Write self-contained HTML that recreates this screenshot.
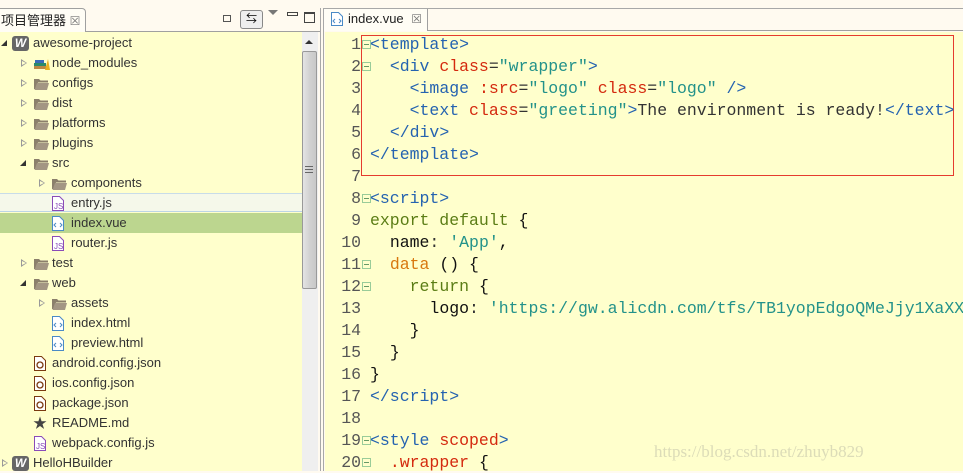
<!DOCTYPE html>
<html><head><meta charset="utf-8"><style>
*{margin:0;padding:0;box-sizing:border-box}
body{width:963px;height:471px;overflow:hidden;background:#fffaf0;font-family:"Liberation Sans","Noto Sans CJK SC",sans-serif;position:relative}
.abs{position:absolute}
.tree{left:0;top:32px;width:302px;height:439px;background:#ffffcc}
.row{position:absolute;left:0;width:302px;height:20px;font-size:13px;color:#333;line-height:20px;white-space:nowrap}
.row span.t{position:absolute}
.arr{position:absolute;top:6px;width:0;height:0;border-left:6px solid #999;border-top:4px solid transparent;border-bottom:4px solid transparent}
.arr:after{content:"";position:absolute;left:-5px;top:-2px;border-left:4px solid #ffffcc;border-top:2px solid transparent;border-bottom:2px solid transparent}
.open{position:absolute;top:7px;width:0;height:0;border-right:6px solid #333;border-top:6px solid transparent}
.code{left:325px;top:32px;width:638px;height:439px;background:#ffffcc;font-family:"Liberation Mono",monospace;font-size:16.5px}
.ln{position:absolute;width:36px;text-align:right;color:#555;left:0}
.cl{position:absolute;left:45px;white-space:pre;color:#333}
.tg{color:#2563b0}.at{color:#d42a0f}.st{color:#23928a}.kw{color:#5b7d15}.pr{color:#d8780e}.bk{color:#111}
.fold{position:absolute;left:37px;width:9px;height:9px;border:1px solid #9c9;background:#ffffcc}
.fold:after{content:"";position:absolute;left:1px;top:3px;width:5px;height:1px;background:#696}
</style></head><body>
<div class="abs" style="left:0;top:31px;width:320px;height:1px;background:#a0a0a0"></div>
<div class="abs" style="left:0;top:8px;width:86px;height:24px;background:#fffdf5;border:1px solid #a0a0a0;border-bottom:none;border-left:none;border-radius:0 4px 0 0"></div>
<div class="abs" style="left:1px;top:10px;font-size:13px;color:#222">项目管理器 <span style="color:#777;font-size:12px">☒</span></div>
<div class="abs" style="left:223px;top:15px;width:8px;height:7px;border:1px solid #555"></div>
<div class="abs" style="left:240px;top:10px;width:23px;height:19px;border:1px solid #888;border-radius:3px;background:#eee;font-size:11px;text-align:center;line-height:17px">⇆</div>
<div class="abs" style="left:268px;top:10px;width:0;height:0;border-left:5px solid transparent;border-right:5px solid transparent;border-top:5px solid #777"></div>
<div class="abs" style="left:287px;top:12px;width:11px;height:4px;border:1px solid #444"></div>
<div class="abs" style="left:304px;top:12px;width:11px;height:11px;border:1px solid #444;border-top-width:2px"></div>
<div class="abs" style="left:320px;top:8px;width:1px;height:463px;background:#a8a8a8"></div>
<div class="abs" style="left:323px;top:8px;width:1px;height:463px;background:#a8a8a8"></div>
<div class="abs" style="left:324px;top:30px;width:639px;height:1px;background:#a0a0a0"></div>
<div class="abs" style="left:324px;top:8px;width:639px;height:1px;background:#a8a8a8"></div>
<div class="abs" style="left:324px;top:9px;width:104px;height:22px;background:#fffdf5;border-right:1px solid #a0a0a0"></div>
<svg class="abs" style="left:330px;top:11px" width="14" height="16"><path d="M1.5 1.5h7l4 4v9h-11z" fill="#fff" stroke="#4a8ac6"/><path d="M5 8l-2 2 2 2M9 8l2 2-2 2" fill="none" stroke="#4a8ac6"/></svg>
<div class="abs" style="left:348px;top:11px;font-size:13px;color:#222">index.vue <span style="color:#777;font-size:12px;margin-left:4px">☒</span></div>

<div class="abs tree">
<div class="abs" style="left:0;top:161px;width:302px;height:19px;background:#f5f8ea;border-top:1px solid #c8dce8;border-bottom:1px solid #bcd4e6"></div>
<div class="abs" style="left:0;top:181px;width:302px;height:20px;background:#bcd68f"></div>
</div>
<div id="rows"></div>
<div class="abs" style="left:302px;top:32px;width:16px;height:439px;background:#efefef"></div>
<div class="abs" style="left:305px;top:40px;width:0;height:0;border-left:4px solid transparent;border-right:4px solid transparent;border-bottom:4px solid #333"></div>
<div class="abs" style="left:302px;top:51px;width:15px;height:238px;border:1px solid #999;border-radius:2px;background:linear-gradient(90deg,#e4e4e4,#d2d2d2 50%,#c8c8c8)"></div>
<div class="abs" style="left:305px;top:166px;width:8px;height:7px;border-top:1px solid #666;border-bottom:1px solid #666"></div>
<div class="abs" style="left:305px;top:169px;width:8px;height:1px;background:#666"></div>

<div class="abs code">
<div class="abs" style="left:36px;top:3px;width:593px;height:141px;border:1px solid #e53b2e"></div>
<div id="code"></div>
<div class="abs" style="left:329px;top:410px;font-family:'Liberation Serif',serif;font-size:17px;color:#dcdcb8">https://blog.csdn.net/zhuyb829</div>
</div>

<script>
var F='<svg width="17" height="14" style="position:absolute;top:4px"><path d="M1 2h5l1.5 1.5H15v2H5L3 12H1z" fill="#8b7f6b"/><path d="M4 6h12l-2 7H1.5z" fill="#a39683"/></svg>';
function doc(c,inner){return '<svg width="14" height="17" style="position:absolute;top:2px"><path d="M1.5 1.5h7l4 4v10h-11z" fill="#fff" stroke="'+c+'"/>'+inner+'</svg>';}
var JS=doc('#8a4cb8','<text x="3" y="14" font-size="8" font-family="Liberation Sans" fill="#8a4cb8">JS</text>');
var VUE=doc('#4a8ac6','<path d="M5 8l-2 2 2 2M9 8l2 2-2 2" fill="none" stroke="#4a8ac6"/>');
var JSON=doc('#7a3a10','<circle cx="7" cy="10" r="3" fill="none" stroke="#7a3a10" stroke-width="1.3"/>');
var W='<div style="position:absolute;top:3px;width:17px;height:15px;background:#666;border-radius:3px;color:#fff;font-weight:bold;font-style:italic;font-size:12px;line-height:15px;text-align:center">W</div>';
var NM='<svg width="18" height="14" style="position:absolute;top:4px"><rect x="1" y="9" width="13" height="3" fill="#b84"/><rect x="1" y="6" width="12" height="3" fill="#2a8a6a"/><rect x="2" y="3" width="9" height="3" fill="#3a6ab8"/><path d="M12 13l3-11 2 11z" fill="#e8b020"/></svg>';
var STAR='<span style="position:absolute;top:0;font-size:14px;color:#444">★</span>';
var rows=[[0,'o',W,'awesome-project'],[1,'c',NM,'node_modules'],[1,'c',F,'configs'],[1,'c',F,'dist'],[1,'c',F,'platforms'],[1,'c',F,'plugins'],[1,'o',F,'src'],[2,'c',F,'components'],[2,'',JS,'entry.js'],[2,'',VUE,'index.vue'],[2,'',JS,'router.js'],[1,'c',F,'test'],[1,'o',F,'web'],[2,'c',F,'assets'],[2,'',VUE,'index.html'],[2,'',VUE,'preview.html'],[1,'',JSON,'android.config.json'],[1,'',JSON,'ios.config.json'],[1,'',JSON,'package.json'],[1,'',STAR,'README.md'],[1,'',JS,'webpack.config.js'],[0,'c',W,'HelloHBuilder']];
var h='';
rows.forEach(function(r,i){var l=r[0],ax=[1,20,38][l],ix=[12,33,51][l],tx=[33,52,71][l];
h+='<div class="row" style="top:'+(33+20*i)+'px">';
if(r[1]=='c')h+='<div class="arr" style="left:'+(ax+1)+'px"></div>';
if(r[1]=='o')h+='<div class="open" style="left:'+ax+'px"></div>';
h+='<div style="position:absolute;left:'+ix+'px;top:0;width:18px;height:20px">'+r[2]+'</div><span class="t" style="left:'+tx+'px">'+r[3]+'</span></div>';});
document.getElementById('rows').innerHTML=h;
var T=function(s){return '<span class="tg">'+s+'</span>'},A=function(s){return '<span class="at">'+s+'</span>'},S=function(s){return '<span class="st">'+s+'</span>'},K=function(s){return '<span class="kw">'+s+'</span>'},P=function(s){return '<span class="pr">'+s+'</span>'},B=function(s){return '<span class="bk">'+s+'</span>'};
var code=[
[1,T('&lt;template&gt;')],
[1,'  '+T('&lt;div')+' '+A('class')+'='+S('"wrapper"')+T('&gt;')],
[0,'    '+T('&lt;image')+' '+A(':src')+'='+S('"logo"')+' '+A('class')+'='+S('"logo"')+' '+T('/&gt;')],
[0,'    '+T('&lt;text')+' '+A('class')+'='+S('"greeting"')+T('&gt;')+'The environment is ready!'+T('&lt;/text&gt;')],
[0,'  '+T('&lt;/div&gt;')],
[0,T('&lt;/template&gt;')],
[0,''],
[1,T('&lt;script&gt;')],
[0,K('export default')+' '+B('{')],
[0,'  '+B('name')+': '+S("'App'")+B(',')],
[1,'  '+P('data')+' '+B('() {')],
[1,'    '+K('return')+' '+B('{')],
[0,'      '+B('logo')+': '+S("'https://gw.alicdn.com/tfs/TB1yopEdgoQMeJjy1XaXX")],
[0,'    '+B('}')],
[0,'  '+B('}')],
[0,B('}')],
[0,T('&lt;/script&gt;')],
[0,''],
[1,T('&lt;style')+' '+A('scoped')+T('&gt;')],
[1,'  '+A('.wrapper')+' '+B('{')]];
var c='';
code.forEach(function(r,i){var y=3+22*i;
c+='<div class="ln" style="top:'+y+'px">'+(i+1)+'</div>';
if(r[0])c+='<div class="fold" style="top:'+(y+5)+'px"></div>';
c+='<div class="cl" style="top:'+y+'px">'+r[1]+'</div>';});
document.getElementById('code').innerHTML=c;
</script>
</body></html>
